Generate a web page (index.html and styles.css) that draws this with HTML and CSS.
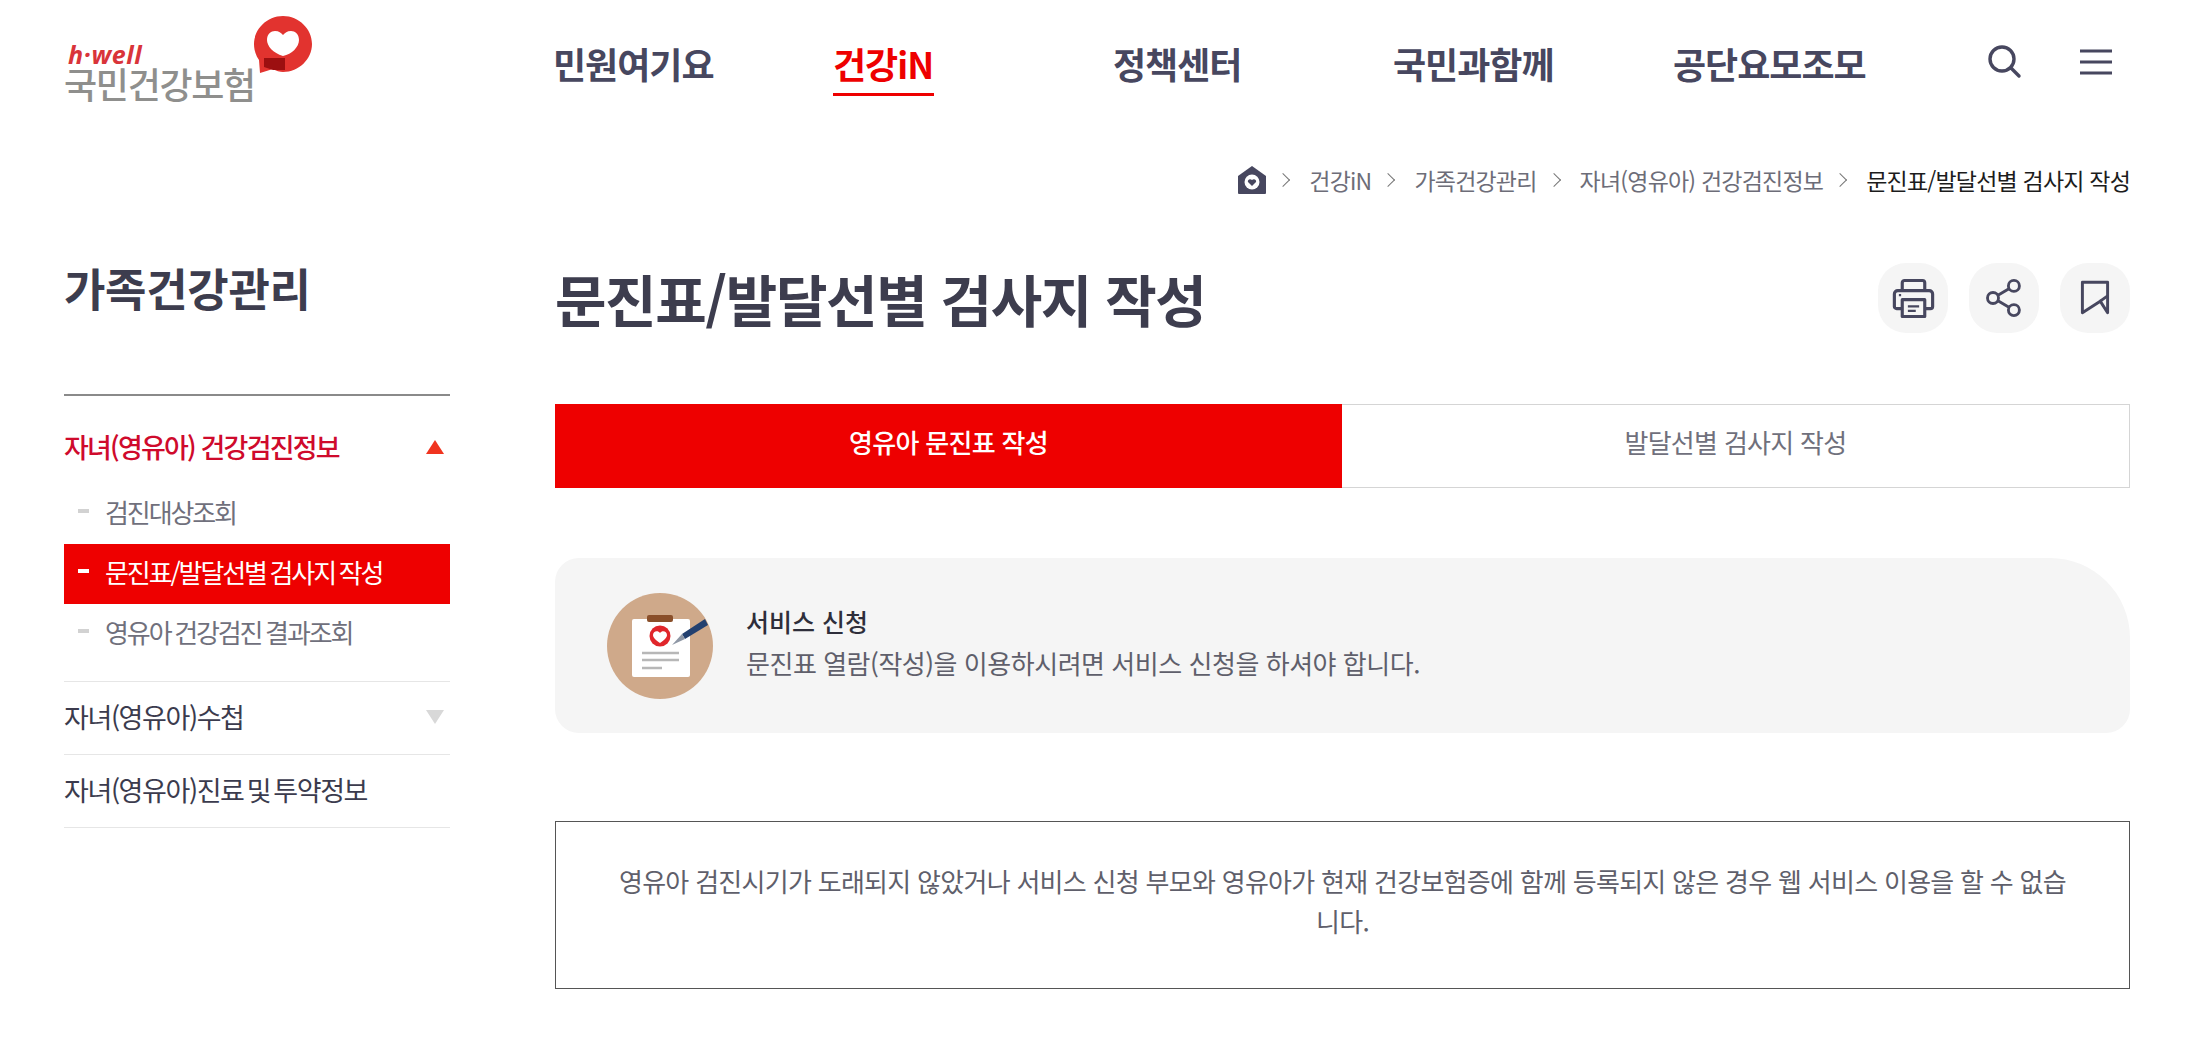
FILE: index.html
```html
<!DOCTYPE html>
<html lang="ko">
<head>
<meta charset="utf-8">
<title>문진표/발달선별 검사지 작성</title>
<link rel="stylesheet" href="styles.css">
</head>
<body>
<header class="header">
  <a class="logo">
    <span class="logo-text">
      <span class="logo-en">h·well</span>
      <span class="logo-ko">국민건강보험</span>
    </span>
    <svg class="logo-mark" viewBox="0 0 60 58" width="60" height="58">
      <path d="M30 0C14 0 1 13 1 28c0 6 2 12 5 16L7 57l13-4c3 2 7 3 10 3 16 0 29-13 29-28S46 0 30 0z" fill="#e2332f"/>
      <path d="M30 40C20 37 14 30 14 24c0-6 4-9 8-9 4 0 6 2 8 4 2-2 4-4 8-4 4 0 8 3 8 9 0 7-7 14-16 16z" fill="#fff"/>
      <path d="M11 42h21v12l-12 0-9-3z" fill="#9c0f10"/>
    </svg>
  </a>
  <nav class="gnb">
    <a class="gnb-item">민원여기요</a>
    <a class="gnb-item is-on">건강iN</a>
    <a class="gnb-item">정책센터</a>
    <a class="gnb-item">국민과함께</a>
    <a class="gnb-item">공단요모조모</a>
  </nav>
  <div class="util">
    <svg viewBox="0 0 36 36" width="36" height="36" fill="none" stroke="#47475f" stroke-width="3.4" stroke-linecap="round"><circle cx="16" cy="15" r="12"/><path d="M25 24l8 8"/></svg>
    <svg viewBox="0 0 36 36" width="36" height="36" fill="none" stroke="#47475f" stroke-width="3.2"><path d="M2 7h32M2 18h32M2 29h32"/></svg>
  </div>
</header>

<div class="crumbs">
  <svg class="crumb-home" viewBox="0 0 28 28" width="28" height="28"><path d="M0 10L14 0l14 10v17a1 1 0 0 1-1 1H1a1 1 0 0 1-1-1z" fill="#47475f"/><circle cx="14" cy="16" r="7.5" fill="#fff"/><path d="M14 20l-4-4c-1-2 2-4 4-2 2-2 5 0 4 2z" fill="#47475f"/></svg>
  <span class="sep"></span><span>건강iN</span>
  <span class="sep"></span><span>가족건강관리</span>
  <span class="sep"></span><span>자녀(영유아) 건강검진정보</span>
  <span class="sep"></span><span class="crumb-now">문진표/발달선별 검사지 작성</span>
</div>

<div class="layout">
  <aside class="side">
    <h2 class="side-title">가족건강관리</h2>
    <ul class="side-menu">
      <li class="side-group is-open">
        <a class="side-link">자녀(영유아) 건강검진정보<i class="tri tri-up"></i></a>
        <ul class="sub">
          <li class="sub-item">검진대상조회</li>
          <li class="sub-item is-on">문진표/발달선별 검사지 작성</li>
          <li class="sub-item">영유아 건강검진 결과조회</li>
        </ul>
      </li>
      <li class="side-group"><a class="side-link">자녀(영유아)수첩<i class="tri tri-down"></i></a></li>
      <li class="side-group"><a class="side-link">자녀(영유아)진료 및 투약정보</a></li>
    </ul>
  </aside>

  <main class="main">
    <div class="title-row">
      <h1 class="page-title">문진표/발달선별 검사지 작성</h1>
      <div class="tools">
        <span class="tool"><svg viewBox="0 0 40 40" width="45" height="45" fill="none" stroke="#47475f" stroke-width="2.8" stroke-linejoin="round"><path d="M10 13V6a2 2 0 0 1 2-2h16a2 2 0 0 1 2 2v7"/><path d="M10 29H5a2 2 0 0 1-2-2V16a3 3 0 0 1 3-3h28a3 3 0 0 1 3 3v11a2 2 0 0 1-2 2h-5"/><path d="M10 21h20v15H10z"/><path d="M15 27h10M15 31h7M7 17h2" stroke-width="2"/></svg></span>
        <span class="tool"><svg viewBox="0 0 40 40" width="44" height="44" fill="none" stroke="#47475f" stroke-width="2.6"><circle cx="29" cy="9" r="5"/><circle cx="29" cy="31" r="5"/><circle cx="10" cy="20" r="5"/><path d="M14.5 17.5l10-6M14.5 22.5l10 6"/></svg></span>
        <span class="tool"><svg viewBox="0 0 40 40" width="42" height="42" fill="none" stroke="#47475f" stroke-width="2.8" stroke-linejoin="round"><path d="M8 5h24v29l-7-11-17 11z"/><path d="M25 23l7-5"/></svg></span>
      </div>
    </div>

    <div class="tabs">
      <a class="tab is-on">영유아 문진표 작성</a>
      <a class="tab">발달선별 검사지 작성</a>
    </div>

    <section class="notice">
      <svg class="notice-icon" viewBox="0 0 106 106" width="106" height="106">
        <circle cx="53" cy="53" r="53" fill="#cfa98a"/>
        <rect x="25" y="26" width="58" height="58" rx="2" fill="#fff"/>
        <rect x="40" y="22" width="26" height="7" rx="2" fill="#8a4f2a"/>
        <circle cx="53" cy="43" r="10.5" fill="#e0262b"/>
        <path d="M53 50c-4-3-7-5-7-8 0-4 5-5 7-2 2-3 7-2 7 2 0 3-3 5-7 8z" fill="#fff"/>
        <path d="M75 41l23-15 3 6-23 14z" fill="#23406f"/>
        <path d="M65 52l10-11 3 5z" fill="#8e97a5"/>
        <path d="M35 60h37M35 67h37M35 75h20" stroke="#b7b7b7" stroke-width="2.6" fill="none"/>
      </svg>
      <div class="notice-body">
        <strong class="notice-title">서비스 신청</strong>
        <p class="notice-text">문진표 열람(작성)을 이용하시려면 서비스 신청을 하셔야 합니다.</p>
      </div>
    </section>

    <div class="message">영유아 검진시기가 도래되지 않았거나 서비스 신청 부모와 영유아가 현재 건강보험증에 함께 등록되지 않은 경우 웹 서비스 이용을 할 수 없습니다.</div>
  </main>
</div>
</body>
</html>
```

FILE: styles.css
```css
* { box-sizing: border-box; }
html, body { margin: 0; padding: 0; }
body {
  width: 2193px;
  height: 1054px;
  overflow: hidden;
  background: #fff;
  font-family: "Noto Sans CJK KR", "Noto Sans", sans-serif;
  color: #47475f;
  padding: 0 63px 0 64px;
}
ul { list-style: none; margin: 0; padding: 0; }
h1, h2, p { margin: 0; }

.header { display: flex; height: 124px; }
.logo { display: flex; width: 489px; align-items: flex-start; padding-top: 16px; }
.logo-text { display: flex; flex-direction: column; width: 189px; margin-top: 27px; }
.logo-en { font-family: "Open Sans", sans-serif; font-style: italic; font-weight: 700; font-size: 25px; line-height: 22px; height: 22px; color: #d9343a; letter-spacing: .6px; padding-left: 4px; }
.logo-ko { font-size: 36px; line-height: 34px; font-weight: 500; color: #8f8f8d; letter-spacing: -1.3px; white-space: nowrap; margin-top: 1px; }
.logo-mark { flex: none; }

.gnb { display: flex; padding-top: 41px; }
.gnb-item { width: 280px; height: 56px; font-size: 36px; line-height: 44px; font-weight: 700; color: #47475f; letter-spacing: -1px; white-space: nowrap; }
.gnb-item.is-on { color: #ee0000; position: relative; }
.gnb-item.is-on::after { content: ""; position: absolute; left: 0; top: 52px; width: 101px; height: 3px; background: #ee0000; }

.util { display: flex; gap: 56px; margin-left: 33px; padding-top: 44px; }

.crumbs { display: flex; justify-content: flex-end; align-items: center; height: 32px; margin-top: 40px; font-size: 23px; color: #6d6d78; letter-spacing: -.8px; }
.crumb-now { color: #1c1c1c; }
.sep { width: 10px; height: 10px; border-top: 1.6px solid #777; border-right: 1.6px solid #777; transform: rotate(45deg); margin: 0 21px 0 12px; }

.layout { display: flex; margin-top: 58px; }
.side { width: 386px; margin-right: 105px; flex: none; }
.side-title { font-size: 45px; line-height: 68px; font-weight: 700; color: #3d3d4e; letter-spacing: -.3px; height: 142px; border-bottom: 2px solid #8a8a8a; }
.side-menu { padding-top: 16px; }
.side-group { border-bottom: 1px solid #e6e6e6; }
.side-group.is-open { padding-bottom: 17px; }
.side-link { display: flex; justify-content: space-between; align-items: center; height: 72px; font-size: 27px; color: #3b3b4d; letter-spacing: -1.4px; word-spacing: -3px; padding: 0 6px 3px 0; }
.is-open > .side-link { color: #cf0a2c; font-weight: 500; letter-spacing: -1.8px; word-spacing: 0; }
.tri { width: 0; height: 0; border-left: 9px solid transparent; border-right: 9px solid transparent; }
.tri-up { border-bottom: 14px solid #f0341f; }
.tri-down { border-top: 14px solid #d8d8d8; }
.sub-item { display: flex; align-items: center; height: 60px; padding: 0 0 6px 14px; font-size: 26px; color: #70707c; letter-spacing: -2.1px; word-spacing: -1.5px; }
.sub-item::before { content: ""; width: 11px; height: 4px; background: #d2d2d2; margin-right: 16px; }
.sub-item.is-on { background: #ee0000; color: #fff; }
.sub-item.is-on::before { background: #fff; }

.main { width: 1575px; flex: none; padding-top: 9px; }
.title-row { display: flex; justify-content: space-between; align-items: center; height: 70px; }
.page-title { font-size: 56px; line-height: 70px; font-weight: 700; color: #3d3d4e; letter-spacing: -1.4px; }
.tools { display: flex; gap: 21px; }
.tool { display: flex; align-items: center; justify-content: center; width: 70px; height: 70px; border-radius: 28px; background: #f5f5f5; }

.tabs { display: flex; height: 84px; margin-top: 71px; }
.tab { flex: 1; display: flex; align-items: center; justify-content: center; padding-bottom: 10px; font-size: 26px; color: #70707c; border: 1px solid #d5d5d5; border-left: 0; letter-spacing: -.7px; }
.tab.is-on { background: #ee0000; color: #fff; border: 0; font-weight: 500; }

.notice { display: flex; align-items: center; gap: 33px; height: 175px; margin-top: 70px; padding-left: 52px; background: #f5f5f5; border-radius: 24px 80px 24px 24px; }
.notice-body { padding-bottom: 3px; }
.notice-title { display: block; font-size: 25px; line-height: 30px; font-weight: 500; color: #2e2e3a; margin-bottom: 7px; }
.notice-text { font-size: 26px; line-height: 40px; color: #5f5f6b; letter-spacing: -.47px; }

.message { margin-top: 88px; height: 168px; padding: 39px 56px; border: 1px solid #555; font-size: 26px; line-height: 40px; text-align: center; color: #5f5f6b; letter-spacing: -.72px; }
```
